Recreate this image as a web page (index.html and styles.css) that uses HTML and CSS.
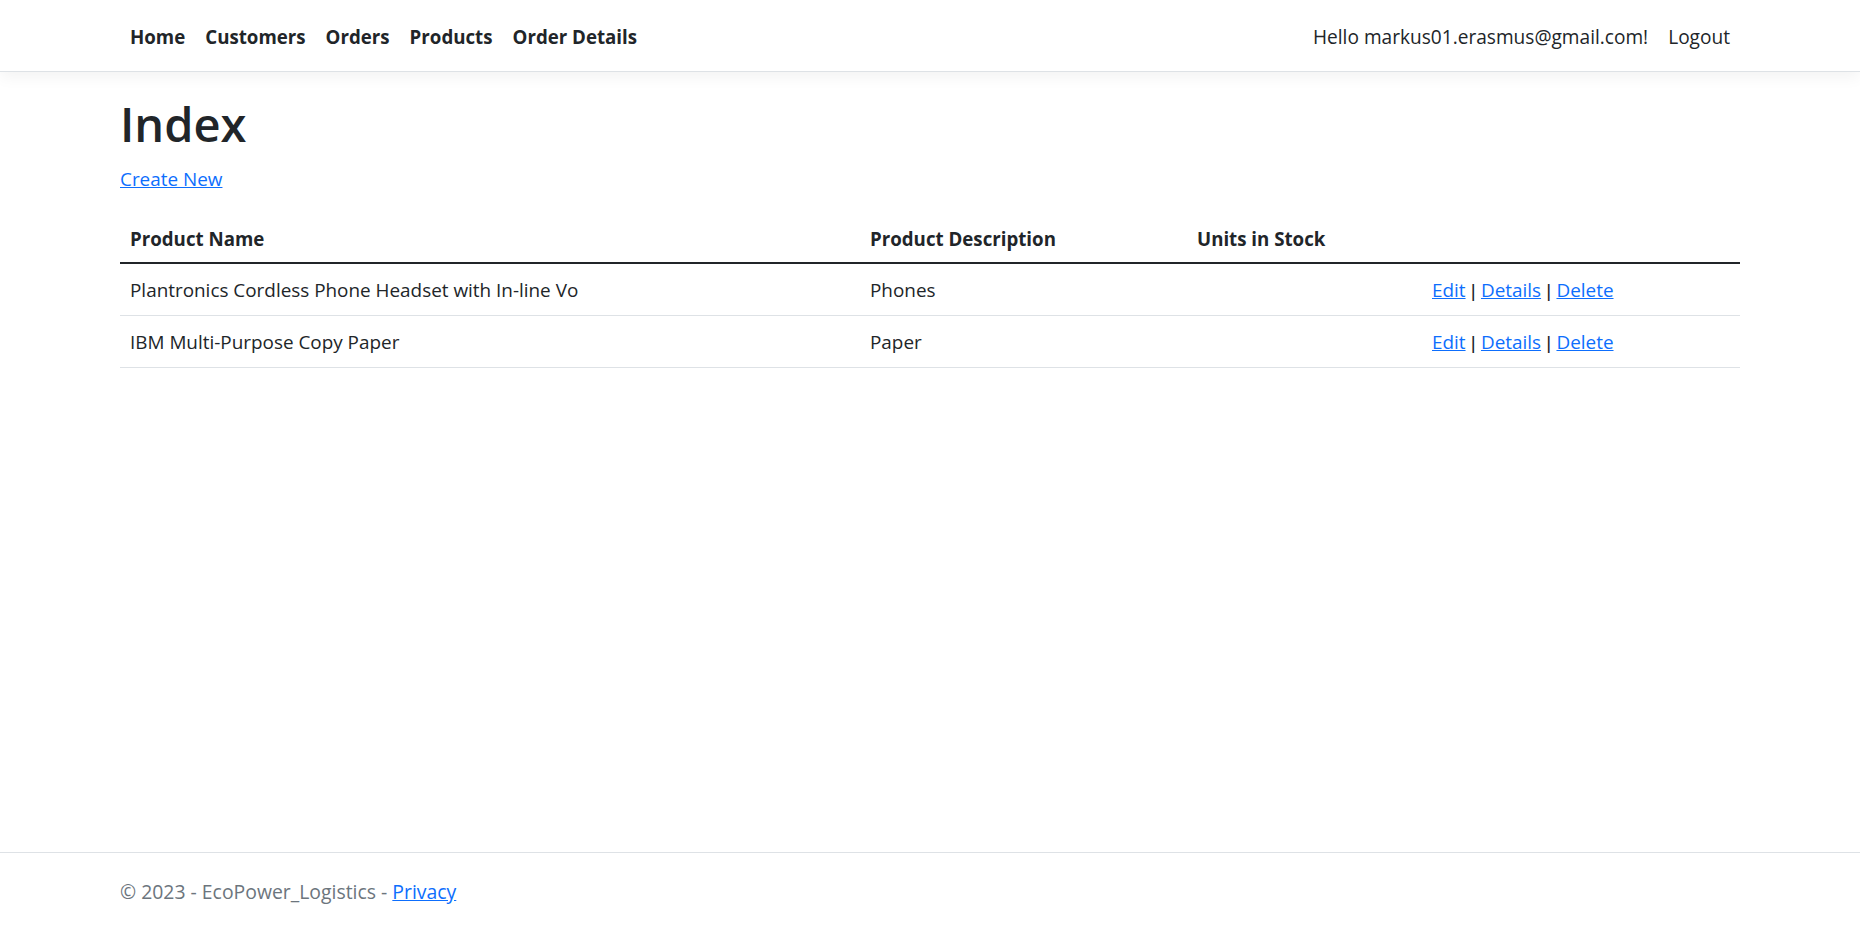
FILE: index.html
```html
<!DOCTYPE html>
<html lang="en">
<head>
<meta charset="utf-8">
<title>Index - EcoPower_Logistics</title>
<link rel="stylesheet" href="styles.css">
</head>
<body>
<header>
  <nav class="navbar">
    <div class="container nav-inner">
      <ul class="nav-list">
        <li><a class="nav-link bold" href="#">Home</a></li>
        <li><a class="nav-link bold" href="#">Customers</a></li>
        <li><a class="nav-link bold" href="#">Orders</a></li>
        <li><a class="nav-link bold" href="#">Products</a></li>
        <li><a class="nav-link bold" href="#">Order Details</a></li>
      </ul>
      <ul class="nav-list">
        <li><a class="nav-link user" href="#">Hello markus01.erasmus@gmail.com!</a></li>
        <li><a class="nav-link user" href="#">Logout</a></li>
      </ul>
    </div>
  </nav>
</header>
<div class="container">
  <main class="main">
    <h1 class="title">Index</h1>
    <p class="para"><a class="link" href="#">Create New</a></p>
    <table class="table">
      <thead>
        <tr>
          <th class="col-name">Product Name</th>
          <th class="col-desc">Product Description</th>
          <th class="col-stock">Units in Stock</th>
          <th class="col-actions"></th>
        </tr>
      </thead>
      <tbody>
        <tr>
          <td>Plantronics Cordless Phone Headset with In-line Vo</td>
          <td>Phones</td>
          <td></td>
          <td><a class="link" href="#">Edit</a><span class="sep"> | </span><a class="link" href="#">Details</a><span class="sep"> | </span><a class="link" href="#">Delete</a></td>
        </tr>
        <tr>
          <td>IBM Multi-Purpose Copy Paper</td>
          <td>Paper</td>
          <td></td>
          <td><a class="link" href="#">Edit</a><span class="sep"> | </span><a class="link" href="#">Details</a><span class="sep"> | </span><a class="link" href="#">Delete</a></td>
        </tr>
      </tbody>
    </table>
  </main>
</div>
<footer class="footer">
  <div class="container">
    &copy; 2023 - EcoPower_Logistics - <a class="link" href="#">Privacy</a>
  </div>
</footer>
</body>
</html>
```
FILE: styles.css
```css
*, *::before, *::after { box-sizing: border-box; }

html {
  position: relative;
  min-height: 100%;
}

body {
  margin: 0 0 75px 0;
  font-family: "Open Sans", "Noto Sans", sans-serif;
  font-size: 18.9px;
  line-height: 30px;
  color: #212529;
  background: #fff;
}

.container {
  width: 100%;
  max-width: 1650px;
  margin: 0 auto;
  padding: 0 15px;
}

.navbar {
  background: #fff;
  border-bottom: 1px solid #dee2e6;
  box-shadow: 0 5px 15px rgba(0, 0, 0, 0.05);
  padding: 10px 0 11px 0;
  margin-bottom: 20px;
}

.nav-inner {
  display: flex;
  justify-content: space-between;
  align-items: center;
}

.nav-list {
  display: flex;
  list-style: none;
  margin: 0;
  padding: 0;
}

.nav-link {
  display: block;
  padding: 12px 10px 8px 10px;
  color: #212529;
  text-decoration: none;
}

.bold { font-weight: 700; font-size: 18.7px; }
.user { font-size: 19.1px; }

.main { padding-bottom: 20px; }

.title {
  margin: 0 0 8px 0;
  padding-top: 2px;
  font-size: 47px;
  font-weight: 600;
  line-height: 60px;
}

.para { margin: 0 0 18px 0; padding-top: 2px; }

.link { color: #0d6efd; text-decoration: underline; }

.sep { font-family: "Liberation Sans", Arial, sans-serif; }

.table {
  width: 100%;
  border-collapse: collapse;
  margin-bottom: 20px;
}

.table th, .table td {
  padding: 11px 10px 9px 10px;
  text-align: left;
  vertical-align: top;
  border-bottom: 1px solid #dee2e6;
}

.table th {
  padding: 12px 10px 8px 10px;
  font-weight: 700;
  font-size: 18.7px;
  border-bottom: 2px solid #212529;
}

.col-name { width: 740px; }
.col-desc { width: 327px; }
.col-stock { width: 235px; }

.footer {
  position: absolute;
  bottom: 0;
  width: 100%;
  white-space: nowrap;
  padding-top: 2px;
  line-height: 73px;
  font-size: 19.4px;
  border-top: 1px solid #dee2e6;
  color: #6c757d;
}
```
